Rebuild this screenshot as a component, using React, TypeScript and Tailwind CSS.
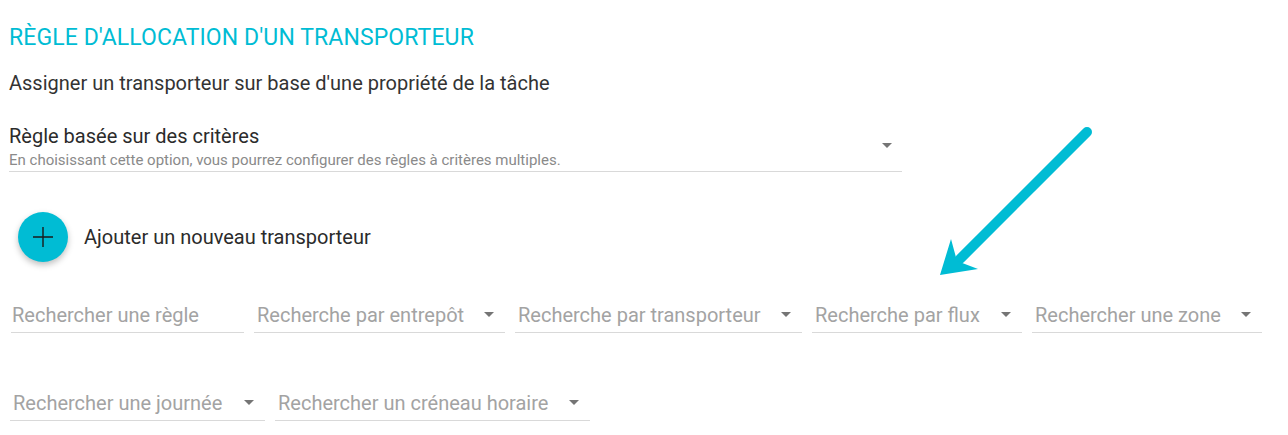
import React from 'react';

const font = { fontFamily: 'Roboto, "Liberation Sans", sans-serif' };

// little dropdown caret, same as the MUI select one
const Caret = () => (
  <svg width="10" height="5" viewBox="0 0 10 5" className="shrink-0">
    <path d="M0 0h10L5 5z" fill="#757575" />
  </svg>
);

const SelectFilter = ({ label, width }: { label: string; width: string }) => (
  <div className={`flex items-center justify-between border-b border-[#d9d9d9] h-[36px] pl-[3px] pr-[11px] ${width}`}>
    <span className="text-[20px] text-[#a3a3a3] whitespace-nowrap">{label}</span>
    <Caret />
  </div>
);

function App() {
  return (
    <div className="relative w-[1288px] h-[435px] bg-white overflow-hidden" style={font}>
      <div className="pl-[9px] pt-[25px]">
        <h1 className="text-[23px] leading-[26px] tracking-[0.1px] text-[#00bcd4]">RÈGLE D'ALLOCATION D'UN TRANSPORTEUR</h1>
        <p className="mt-[20px] text-[20px] leading-[24px] text-[#333]">
          Assigner un transporteur sur base d'une propriété de la tâche
        </p>

        {/* allocation type select */}
        <div className="mt-[27px] w-[893px] flex items-center justify-between border-b border-[#d9d9d9] pb-[1px]">
          <div>
            <div className="text-[20px] leading-[28px] text-[#2b2b2b]">Règle basée sur des critères</div>
            <div className="text-[15px] leading-[20px] text-[#8a8a8a]">
              En choisissant cette option, vous pourrez configurer des règles à critères multiples.
            </div>
          </div>
          <div className="pr-[10px] mb-[2px]">
            <Caret />
          </div>
        </div>

        {/* add carrier */}
        <div className="mt-[40px] flex items-center">
          <button className="ml-[9px] w-[50px] h-[50px] rounded-full bg-[#00bcd4] flex items-center justify-center shadow-[0_3px_6px_rgba(0,0,0,0.25)]">
            <svg width="22" height="22" viewBox="0 0 22 22">
              <path d="M11 1v20M1 11h20" stroke="#1a1a1a" strokeWidth="1.4" />
            </svg>
          </button>
          <span className="ml-[16px] text-[20px] text-[#2b2b2b]">Ajouter un nouveau transporteur</span>
        </div>

        {/* filters */}
        <div className="mt-[35px] flex items-end gap-[10px] pl-[2px]">
          <div className="w-[233px] h-[36px] border-b border-[#d9d9d9] flex items-end pb-[2px] pl-[1px]">
            <span className="text-[20px] text-[#a3a3a3] whitespace-nowrap">Rechercher une règle</span>
          </div>
          <SelectFilter label="Recherche par entrepôt" width="w-[251px]" />
          <SelectFilter label="Recherche par transporteur" width="w-[287px]" />
          <SelectFilter label="Recherche par flux" width="w-[210px]" />
          <SelectFilter label="Rechercher une zone" width="w-[230px]" />
        </div>
        <div className="mt-[52px] flex items-end gap-[10px] pl-[1px]">
          <SelectFilter label="Rechercher une journée" width="w-[255px]" />
          <SelectFilter label="Rechercher un créneau horaire" width="w-[315px]" />
        </div>
      </div>

      {/* hint arrow drawn over the page */}
      <svg className="absolute left-[930px] top-[120px]" width="170" height="165" viewBox="0 0 170 165">
        <path d="M157 12L30 139" stroke="#00bcd4" strokeWidth="10" strokeLinecap="round" />
        <path d="M10 155L21 119L27 141L48 149Z" fill="#00bcd4" />
      </svg>
    </div>
  );
}

export default App;
